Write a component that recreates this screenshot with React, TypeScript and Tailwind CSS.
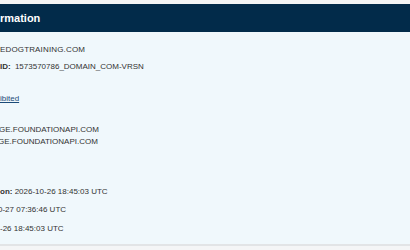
export default function App() {
    return (
        <div className="min-h-[250px] w-[410px] overflow-hidden bg-[#f4f5f6] pt-1 font-['Liberation_Sans',Arial,sans-serif] text-[#333333]">
            <div className="border-b-2 border-[#e2e4e6] bg-[#f0f8fc]">
                {/* header */}
                <div className="flex h-7 items-center bg-[#022b4a] text-[11px] font-bold text-white">
                    <h2>rmation</h2>
                </div>

                {/* whois rows */}
                <div className="pb-[9px] pt-3 text-[8px] leading-[12px]">
                    <p className="tracking-[0.15px]">EDOGTRAINING.COM</p>
                    <p className="mt-[5px]">
                        <b className="mr-[2px]">ID:</b> 1573570786_DOMAIN_COM-VRSN
                    </p>
                    <p className="mt-5">
                        <a href="#" className="text-[#1b4b78] underline">
                            ibited
                        </a>
                    </p>
                    <p className="-ml-px mt-[19px]">GE.FOUNDATIONAPI.COM</p>
                    <p className="-ml-[2px]">GE.FOUNDATIONAPI.COM</p>
                    <p className="mt-[38px]">
                        <b>on:</b> 2026-10-26 18:45:03 UTC
                    </p>
                    <p className="-ml-[2px] mt-[6px]">0-27 07:36:46 UTC</p>
                    <p className="mt-[7px]">-26 18:45:03 UTC</p>
                </div>
            </div>
        </div>
    );
}
